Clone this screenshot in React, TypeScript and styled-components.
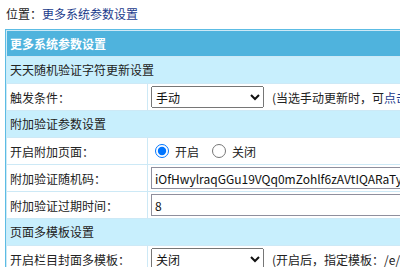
import styled, { createGlobalStyle } from 'styled-components'

const GlobalStyle = createGlobalStyle`
  html, body {
    margin: 0;
    padding: 0;
    background: #ffffff;
    overflow: hidden;
  }
  body {
    font-family: "Noto Sans CJK SC", "Noto Sans", sans-serif;
    font-size: 12px;
    color: #222222;
  }
`

type FieldRow = {
  label: string
  kind: 'select' | 'radio' | 'text'
  value?: string
  note?: string
  link?: string
  noteEnd?: string
}

type Section = {
  title: string
  rows: FieldRow[]
}

const sections: Section[] = [
  {
    title: '天天随机验证字符更新设置',
    rows: [
      {
        label: '触发条件：',
        kind: 'select',
        value: '手动',
        note: '(当选手动更新时，可',
        link: '点击这里更新',
        noteEnd: ')',
      },
    ],
  },
  {
    title: '附加验证参数设置',
    rows: [
      { label: '开启附加页面：', kind: 'radio' },
      { label: '附加验证随机码：', kind: 'text', value: 'iOfHwylraqGGu19VQq0mZohlf6zAVtIQARaTyUw5bCe' },
      { label: '附加验证过期时间：', kind: 'text', value: '8' },
    ],
  },
  {
    title: '页面多模板设置',
    rows: [
      {
        label: '开启栏目封面多模板：',
        kind: 'select',
        value: '关闭',
        note: '(开启后，指定模板：/e/admin/template/',
      },
    ],
  },
]

const App = () => {
  return (
    <Page>
      <GlobalStyle />
      <Crumb>
        位置：<CrumbLink>更多系统参数设置</CrumbLink>
      </Crumb>
      <Table>
        <HeadRow>更多系统参数设置</HeadRow>
        {sections.map((section) => (
          <Group key={section.title}>
            <SectionRow>{section.title}</SectionRow>
            {section.rows.map((row) => (
              <Row key={row.label}>
                <Label>{row.label}</Label>
                <Value>
                  {row.kind === 'select' && (
                    <Select defaultValue={row.value}>
                      <option>{row.value}</option>
                    </Select>
                  )}
                  {row.kind === 'radio' && (
                    <Radios>
                      <RadioLabel>
                        <input type='radio' name='addpage' defaultChecked />
                        开启
                      </RadioLabel>
                      <RadioLabel>
                        <input type='radio' name='addpage' />
                        关闭
                      </RadioLabel>
                    </Radios>
                  )}
                  {row.kind === 'text' && <TextInput defaultValue={row.value} />}
                  {row.note && (
                    <Note>
                      {row.note}
                      {row.link && <NoteLink>{row.link}</NoteLink>}
                      {row.noteEnd}
                    </Note>
                  )}
                </Value>
              </Row>
            ))}
          </Group>
        ))}
      </Table>
    </Page>
  )
}

export default App

const Page = styled.div`
  width: 700px;
`

const Crumb = styled.div`
  height: 29px;
  line-height: 28px;
  padding-left: 6px;
  color: #222222;
`

const CrumbLink = styled.span`
  color: #1b3b8c;
`

const Table = styled.div`
  margin-left: 5px;
  border: 1px solid #5cbce4;
  padding: 1px;
  display: flex;
  flex-direction: column;
  gap: 1px;
  background: #cde9f6;
`

const Group = styled.div`
  display: flex;
  flex-direction: column;
  gap: 1px;
`

const HeadRow = styled.div`
  height: 25px;
  line-height: 25px;
  padding-left: 3px;
  background: #4fb3dd;
  color: #ffffff;
  font-weight: bold;
`

const SectionRow = styled.div`
  height: 26px;
  line-height: 26px;
  padding-left: 3px;
  background: #c8effd;
  color: #222222;
`

const Row = styled.div`
  height: 26px;
  display: grid;
  grid-template-columns: 140px 1fr;
  gap: 1px;
`

const Label = styled.div`
  background: #ffffff;
  padding-left: 3px;
  display: flex;
  align-items: center;
`

const Value = styled.div`
  background: #ffffff;
  padding-left: 3px;
  display: flex;
  align-items: center;
  gap: 8px;
  white-space: nowrap;
`

const Select = styled.select`
  width: 113px;
  height: 22px;
  font-family: "Noto Sans CJK SC", sans-serif;
  font-size: 12px;
  color: #111111;
`

const TextInput = styled.input`
  width: 420px;
  height: 22px;
  box-sizing: border-box;
  padding: 0 3px;
  border: 1px solid #8f8f9d;
  font-family: "Noto Sans CJK SC", sans-serif;
  font-size: 12px;
  color: #111111;
`

const Radios = styled.div`
  display: flex;
  align-items: center;
  gap: 9px;
`

const RadioLabel = styled.label`
  display: flex;
  align-items: center;
  gap: 6px;
  input {
    margin: 0 0 0 4px;
    width: 14px;
    height: 14px;
  }
`

const Note = styled.span`
  color: #222222;
`

const NoteLink = styled.span`
  color: #1b3b8c;
`
